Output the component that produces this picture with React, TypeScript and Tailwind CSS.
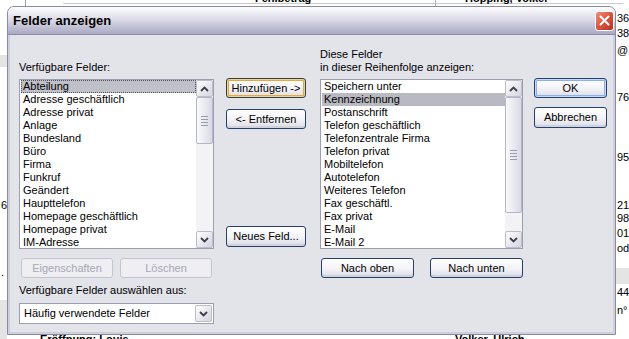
import React from 'react';

const font = "font-['Liberation_Sans',Arial,sans-serif]";

const available = [
  'Abteilung',
  'Adresse geschäftlich',
  'Adresse privat',
  'Anlage',
  'Bundesland',
  'Büro',
  'Firma',
  'Funkruf',
  'Geändert',
  'Haupttelefon',
  'Homepage geschäftlich',
  'Homepage privat',
  'IM-Adresse',
];

const shown = [
  'Speichern unter',
  'Kennzeichnung',
  'Postanschrift',
  'Telefon geschäftlich',
  'Telefonzentrale Firma',
  'Telefon privat',
  'Mobiltelefon',
  'Autotelefon',
  'Weiteres Telefon',
  'Fax geschäftl.',
  'Fax privat',
  'E-Mail',
  'E-Mail 2',
];

type BtnProps = {
  children: React.ReactNode;
  className?: string;
  hover?: boolean;
  isDefault?: boolean;
  disabled?: boolean;
};

const Btn: React.FC<BtnProps> = ({ children, className = '', hover, isDefault, disabled }) => {
  if (disabled) {
    return (
      <div
        className={`flex items-center justify-center rounded-[3px] border border-[#c4c3d2] bg-[#efeff3] text-[11px] text-[#a7a6b4] ${className}`}
      >
        {children}
      </div>
    );
  }
  const ring = hover
    ? 'shadow-[inset_0_0_0_1px_#f9d26a,inset_0_0_0_2px_#eba63a]'
    : isDefault
      ? 'shadow-[inset_0_0_0_1px_#c6d8f6,inset_0_0_0_2px_#8eb0ea]'
      : 'shadow-[inset_0_-2px_0_0_#d2d2dc]';
  return (
    <div
      className={`flex items-center justify-center rounded-[3px] border border-[#23406e] bg-gradient-to-b from-white via-[#f4f4f8] to-[#dcdce6] text-[11px] text-black ${ring} ${className}`}
    >
      {children}
    </div>
  );
};

const Arrow: React.FC<{ up?: boolean }> = ({ up }) => (
  <div className="flex h-[17px] w-[17px] items-center justify-center rounded-[2px] border border-[#bdbccd] bg-gradient-to-br from-white to-[#d4d4e0]">
    <svg width="9" height="6" viewBox="0 0 9 6">
      <path
        d={up ? 'M1 5 L4.5 1.5 L8 5' : 'M1 1 L4.5 4.5 L8 1'}
        fill="none"
        stroke="#3d3d4c"
        strokeWidth="1.8"
      />
    </svg>
  </div>
);

const ScrollBar: React.FC<{ thumb: number }> = ({ thumb }) => (
  <div className="flex h-full w-[17px] flex-col bg-[#f3f3f6]">
    <Arrow up />
    <div className="flex-1">
      <div
        className="flex w-[17px] flex-col items-center justify-center gap-[2px] rounded-[2px] border border-[#b7b6c8] bg-gradient-to-r from-[#fafafc] to-[#d9d9e4]"
        style={{ height: thumb }}
      >
        <div className="h-px w-[7px] bg-[#9a9aae]" />
        <div className="h-px w-[7px] bg-[#9a9aae]" />
        <div className="h-px w-[7px] bg-[#9a9aae]" />
        <div className="h-px w-[7px] bg-[#9a9aae]" />
      </div>
    </div>
    <Arrow />
  </div>
);

const ListBox: React.FC<{
  items: string[];
  selected: number;
  focus?: boolean;
  thumb: number;
  className?: string;
}> = ({ items, selected, focus, thumb, className = '' }) => (
  <div className={`flex h-[170px] border border-[#9b9fb0] bg-white ${className}`}>
    <div className="flex-1 overflow-hidden pl-[1px]">
      {items.map((it, i) => (
        <div
          key={it}
          className={`h-[13px] whitespace-nowrap pl-[2px] text-[11px] leading-[13px] text-black ${
            i === selected
              ? focus
                ? 'bg-[#c0c0c8] outline outline-1 outline-dotted outline-[#505060] -outline-offset-1'
                : 'bg-[#b9b9c1]'
              : ''
          }`}
        >
          {it}
        </div>
      ))}
    </div>
    <ScrollBar thumb={thumb} />
  </div>
);

const BgText: React.FC<{ className: string; children: React.ReactNode }> = ({ className, children }) => (
  <div className={`absolute whitespace-nowrap text-[11px] leading-[13px] text-black ${className}`}>{children}</div>
);

export default function App() {
  return (
    <div className={`relative h-[339px] w-[629px] overflow-hidden bg-white ${font}`}>
      {/* application behind the dialog */}
      <div className="absolute left-[25px] top-0 h-[6px] w-px bg-[#a0a0a0]" />
      <div className="absolute left-[63px] top-[3px] h-px w-[560px] bg-[#c8c8d0]" />
      <BgText className="left-[255px] top-[-8px] font-bold">Fehlbetrag</BgText>
      <div className="absolute left-[435px] top-0 h-[6px] w-px bg-[#b0b0b0]" />
      <BgText className="left-[465px] top-[-8px] font-bold">Hopping, Volker</BgText>
      <BgText className="left-[617px] top-[12px]">36</BgText>
      <BgText className="left-[617px] top-[27px]">38</BgText>
      <BgText className="left-[617px] top-[44px]">@.</BgText>
      <BgText className="left-[617px] top-[91px]">76</BgText>
      <BgText className="left-[617px] top-[151px]">95</BgText>
      <BgText className="left-[617px] top-[199px]">21</BgText>
      <BgText className="left-[617px] top-[212px]">98</BgText>
      <BgText className="left-[617px] top-[227px]">01</BgText>
      <BgText className="left-[617px] top-[242px]">od</BgText>
      <div className="absolute left-[616px] top-[268px] h-[16px] w-[13px] bg-[#e4e4e4]" />
      <BgText className="left-[617px] top-[286px]">44</BgText>
      <BgText className="left-[617px] top-[304px]">n°</BgText>
      <div className="absolute left-0 top-[55px] h-[12px] w-[7px] bg-[#e4e4e4]" />
      <BgText className="left-[1px] top-[199px]">6</BgText>
      <BgText className="left-[1px] top-[266px]">.</BgText>
      <div className="absolute left-0 top-[300px] h-[39px] w-[7px] bg-[#e4e4e4]" />
      <BgText className="left-[40px] top-[333px] font-bold">Eröffnung: Louis</BgText>
      <BgText className="left-[455px] top-[333px] font-bold">Volker, Ulrich</BgText>

      {/* dialog window */}
      <div className="absolute left-[7px] top-[6px] flex h-[329px] w-[609px] flex-col overflow-hidden rounded-t-[7px] border border-[#8a89a6] bg-[#e3e3ea]">
        <div className="flex h-[27px] items-center justify-between bg-gradient-to-b from-[#fdfdfe] via-[#d8d8e5] to-[#a9a9c3] pl-[5px] pr-[1px]">
          <span className="text-[13px] font-bold text-black">Felder anzeigen</span>
          <div className="flex h-[20px] w-[19px] items-center justify-center rounded-[3px] border border-white bg-gradient-to-br from-[#ec8d7c] via-[#d9553f] to-[#b8301f]">
            <svg width="11" height="11" viewBox="0 0 11 11">
              <path d="M1.5 1.5 L9.5 9.5 M9.5 1.5 L1.5 9.5" stroke="white" strokeWidth="2" strokeLinecap="round" />
            </svg>
          </div>
        </div>
        <div className="h-px bg-[#8c8ca8]" />
        <div className="flex flex-1 border-x-2 border-b-2 border-[#cfcfdc] pl-[9px] pt-[13px]">
          {/* left column */}
          <div className="flex w-[195px] flex-col">
            <div className="h-[13px]" />
            <div className="h-[13px] text-[11px] leading-[13px]">Verfügbare Felder:</div>
            <ListBox className="mt-[5px]" items={available} selected={0} focus thumb={47} />
            <div className="mt-[9px] flex gap-[7px] pl-[2px]">
              <Btn disabled className="h-[20px] w-[92px]">Eigenschaften</Btn>
              <Btn disabled className="h-[20px] w-[92px]">Löschen</Btn>
            </div>
            <div className="mt-[6px] h-[13px] text-[11px] leading-[13px]">Verfügbare Felder auswählen aus:</div>
            <div className="mt-[6px] flex h-[21px] items-center justify-between border border-[#9b9fb0] bg-white pl-[4px] pr-[1px]">
              <span className="text-[11px]">Häufig verwendete Felder</span>
              <Arrow />
            </div>
          </div>

          {/* middle buttons */}
          <div className="ml-[12px] flex w-[80px] flex-col">
            <Btn hover className="mt-[30px] h-[20px]">Hinzufügen -&gt;</Btn>
            <Btn className="mt-[11px] h-[20px]">&lt;- Entfernen</Btn>
            <Btn className="mt-[97px] h-[21px]">Neues Feld...</Btn>
          </div>

          {/* right column */}
          <div className="ml-[14px] flex w-[203px] flex-col">
            <div className="h-[13px] text-[11px] leading-[13px]">Diese Felder</div>
            <div className="h-[13px] text-[11px] leading-[13px]">in dieser Reihenfolge anzeigen:</div>
            <ListBox className="mt-[5px]" items={shown} selected={1} thumb={116} />
            <div className="mt-[9px] flex gap-[16px] pl-[1px]">
              <Btn className="h-[20px] w-[93px]">Nach oben</Btn>
              <Btn className="h-[20px] w-[93px]">Nach unten</Btn>
            </div>
          </div>

          {/* dialog buttons */}
          <div className="ml-[11px] flex w-[73px] flex-col">
            <Btn isDefault className="mt-[30px] h-[20px]">OK</Btn>
            <Btn className="mt-[9px] h-[21px]">Abbrechen</Btn>
          </div>
        </div>
      </div>
    </div>
  );
}
